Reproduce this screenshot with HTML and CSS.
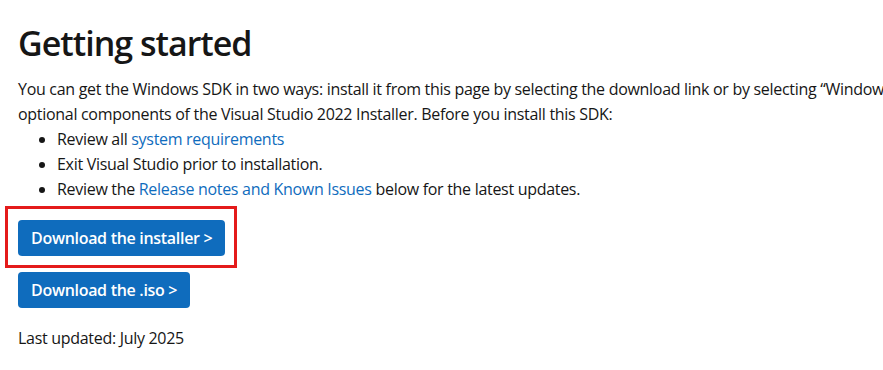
FILE: index.html
```html
<!DOCTYPE html>
<html lang="en">

<head>
  <meta charset="UTF-8">
  <meta name="viewport" content="width=device-width, initial-scale=1.0">
  <title>Windows SDK</title>
  <link rel="stylesheet" href="styles.css">
</head>

<body>
  <div class="content">
    <h1>Getting started</h1>
    <p class="intro">You can get the Windows SDK in two ways: install it from this page by selecting the download link or by selecting “Windows SDK” in the optional components of the Visual Studio 2022 Installer. Before you install this SDK:</p>
    <ul class="steps">
      <li>Review all <a href="#">system requirements</a></li>
      <li>Exit Visual Studio prior to installation.</li>
      <li>Review the <a href="#">Release notes and Known Issues</a> below for the latest updates.</li>
    </ul>

    <div class="highlight">
      <a class="button" href="#">Download the installer &gt;</a>
    </div>
    <a class="button" href="#">Download the .iso &gt;</a>

    <p class="updated">Last updated: July 2025</p>
  </div>
</body>

</html>
```

FILE: styles.css
```css
body {
  font-family: "Open Sans", sans-serif;
  margin: 0;
  padding: 0;
  background-color: #ffffff;
  color: #161616;
  overflow: hidden;
}

.content {
  width: 1010px;
  padding: 16px 0 0 18px;
  letter-spacing: -0.3px;
}

h1 {
  font-size: 34px;
  font-weight: 600;
  letter-spacing: -1px;
  line-height: 54px;
  margin: 0 0 7px 0;
}

.intro {
  font-size: 16px;
  line-height: 25px;
  margin: 0;
}

.steps {
  font-size: 16px;
  line-height: 25px;
  margin: 0;
  padding-left: 39px;
}

a {
  color: #0f6cbd;
  text-decoration: none;
}

.highlight {
  display: inline-block;
  margin: 4px 0 0 -13px;
  padding: 11px 9px 9px 10px;
  border: 3px solid #e41b1b;
}

.button {
  display: inline-block;
  background-color: #0f6cbd;
  color: white;
  font-weight: 600;
  font-size: 16px;
  line-height: 36px;
  padding: 0 13px;
  border-radius: 4px;
}

.content > .button {
  display: table;
  margin-top: 4px;
}

.updated {
  font-size: 16px;
  margin: 19px 0 0 0;
}
```
